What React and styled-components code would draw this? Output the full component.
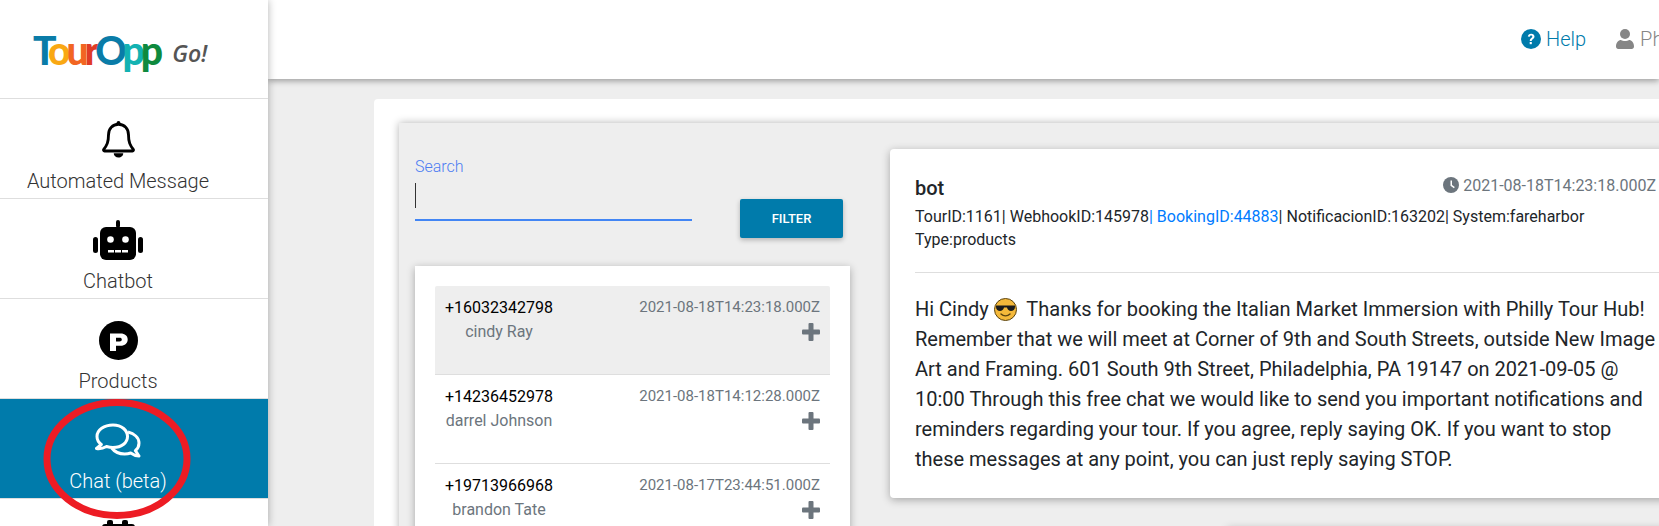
import styled, { createGlobalStyle } from 'styled-components';

const GlobalStyle = createGlobalStyle`
  html, body {
    margin: 0;
    height: 526px;
    overflow: hidden;
    background: #eeeeee;
    font-family: Roboto, "Liberation Sans", sans-serif;
  }
  * { box-sizing: border-box; }
`

const conversations = [
  { phone: '+16032342798', name: 'cindy Ray', time: '2021-08-18T14:23:18.000Z', active: true },
  { phone: '+14236452978', name: 'darrel Johnson', time: '2021-08-18T14:12:28.000Z' },
  { phone: '+19713966968', name: 'brandon Tate', time: '2021-08-17T23:44:51.000Z' },
]

const logoLetters = [
  ['T', '#0a7ca8'], ['o', '#f9a813'], ['u', '#f26522'], ['r', '#e03c26'],
  ['O', '#0a7ca8'], ['p', '#12b2b2'], ['p', '#0e8a3e'],
]

function BellIcon() {
  return (
    <svg width="35" height="40" viewBox="0 0 36 42" fill="none">
      <path d="M18 4.500c-6.500 0-10.500 5-10.500 11 0 8-1.700 11-5 15.300-.6.800-.1 1.700.8 1.700h29.400c.9 0 1.400-.9.8-1.700-3.300-4.300-5-7.300-5-15.300 0-6-4-11-10.500-11z" stroke="#000" strokeWidth="3" strokeLinejoin="round" />
      <circle cx="18" cy="3" r="2" fill="#000" />
      <path d="M13 35h10c0 2.500-2.200 4.500-5 4.500s-5-2-5-4.500z" fill="#000" />
    </svg>
  )
}

function RobotIcon() {
  return (
    <svg width="50" height="40" viewBox="0 0 50 40" fill="#000">
      <rect x="23" y="0" width="4" height="8" rx="2" />
      <rect x="7" y="7" width="36" height="33" rx="6" />
      <rect x="0" y="17" width="5" height="16" rx="2.500" />
      <rect x="45" y="17" width="5" height="16" rx="2.500" />
      <circle cx="17.500" cy="19.500" r="3.300" fill="#fff" />
      <circle cx="32.500" cy="19.500" r="3.300" fill="#fff" />
      <rect x="15" y="30" width="6" height="2.500" fill="#fff" />
      <rect x="22" y="30" width="6" height="2.500" fill="#fff" />
      <rect x="29" y="30" width="6" height="2.500" fill="#fff" />
    </svg>
  )
}

function ParkingIcon() {
  return (
    <svg width="39" height="39" viewBox="0 0 39 39">
      <circle cx="19.500" cy="19.500" r="19.500" fill="#000" />
      <path d="M11 30V12.500h10.500c4.500 0 7.200 2.400 7.200 6s-2.700 6.300-7.200 6.300H17V30zM17 16.800v3.700h3.500c1.500 0 2.300-.7 2.300-1.900s-.8-1.800-2.300-1.800z" fill="#fff" fillRule="evenodd" />
    </svg>
  )
}

function ChatIcon() {
  return (
    <svg width="46" height="35" viewBox="1 0 46 35" fill="none" stroke="#fff" strokeWidth="3" strokeLinejoin="round">
      <path d="M19 2C10 2 3 7 3 13.500c0 3.200 1.700 6 4.300 8L2.500 25.500c3.500.5 7-.3 10-2 2 .6 4.200 1 6.500 1 9 0 14.500-5 14.500-11S28 2 19 2z" />
      <path d="M34 9c6 1.500 11 5.500 11 11 0 3-1.400 5.800-3.600 7.700l3.600 5.300c-3-.2-6-1.300-8.300-3-2 .7-4 1-6 1-5.500 0-10-2-13-6" />
    </svg>
  )
}

function HashIcon() {
  return (
    <svg width="33" height="40" viewBox="0 0 33 40" fill="#000">
      <rect x="5" y="0" width="6" height="40" rx="2" />
      <rect x="20" y="0" width="6" height="40" rx="2" />
      <rect x="0" y="4" width="33" height="6" rx="3" />
    </svg>
  )
}

function PlusIcon() {
  return (
    <svg width="18" height="18" viewBox="0 0 18 18" fill="#6c757d">
      <rect x="6.500" y="0" width="5" height="18" rx="1" />
      <rect x="0" y="6.500" width="18" height="5" rx="1" />
    </svg>
  )
}

function HelpIcon() {
  return (
    <svg width="20" height="20" viewBox="0 0 20 20">
      <circle cx="10" cy="10" r="10" fill="#007bab" />
      <path d="M6.800 7.600C7 5.800 8.300 4.700 10.200 4.700c1.900 0 3.300 1.100 3.300 2.800 0 2.500-2.800 2.500-2.800 4.600H8.800c0-3 2.500-3 2.500-4.500 0-.7-.5-1.100-1.200-1.100-.8 0-1.200.5-1.300 1.300z" fill="#fff" />
      <rect x="8.700" y="13" width="2.100" height="2.200" fill="#fff" />
    </svg>
  )
}

function UserIcon() {
  return (
    <svg width="18" height="20" viewBox="0 0 18 20" fill="#868686">
      <circle cx="9" cy="5" r="5" />
      <path d="M0 17.500c0-4 2.500-6.500 5-6.500 1 .6 2.500 1 4 1s3-.4 4-1c2.500 0 5 2.500 5 6.500 0 1.500-1 2.500-2.200 2.500H2.200C1 20 0 19 0 17.500z" />
    </svg>
  )
}

function ClockIcon() {
  return (
    <svg width="16" height="16" viewBox="0 0 16 16">
      <circle cx="8" cy="8" r="8" fill="#6c757d" />
      <path d="M7.500 3.500h1.500v4.500l2.800 2-.9 1.200-3.400-2.500z" fill="#fff" />
    </svg>
  )
}

function SunglassesEmoji() {
  return (
    <svg width="23" height="23" viewBox="0 0 23 23">
      <circle cx="11.500" cy="11.500" r="11" fill="#f5b93a" stroke="#5a4310" strokeWidth="1" />
      <path d="M2 7.500h19v1.500c0 2.500-2 4-4 4s-3.500-1.500-4-3.500h-3c-.5 2-2 3.500-4 3.500s-4-1.500-4-4z" fill="#1c1c1c" />
      <path d="M7 16c2.500 2.500 6.500 2.500 9 0" fill="none" stroke="#5a4310" strokeWidth="1.400" strokeLinecap="round" />
    </svg>
  )
}

function App() {
  return (
    <Page>
      <GlobalStyle />

      <Sidebar>
        <LogoBox>
          <Logo>
            {logoLetters.map(([letter, color], i) => <LogoLetter key={i} $color={color}>{letter}</LogoLetter>)}
          </Logo>
          <LogoGo>Go!</LogoGo>
        </LogoBox>
        <NavItem><NavIcon><BellIcon /></NavIcon>Automated Message</NavItem>
        <NavItem><NavIcon><RobotIcon /></NavIcon>Chatbot</NavItem>
        <NavItem><NavIcon><ParkingIcon /></NavIcon>Products</NavItem>
        <NavItem $active><NavIcon><ChatIcon /></NavIcon>Chat (beta)</NavItem>
        <NavItem><NavIcon><HashIcon /></NavIcon></NavItem>
      </Sidebar>

      <RedCircle width="154" height="128" viewBox="0 0 154 128">
        <ellipse cx="77" cy="64" rx="70" ry="56.500" fill="none" stroke="#ed1c24" strokeWidth="7" />
      </RedCircle>

      <Content>
        <Header>
          <HelpLink><HelpIcon />Help</HelpLink>
          <UserLink><UserIcon />Philly Tour Hub</UserLink>
        </Header>

        <Board>
          <ChatPanel>
            <LeftColumn>
              <SearchRow>
                <SearchField>
                  <SearchLabel>Search</SearchLabel>
                  <SearchInput><Caret /></SearchInput>
                </SearchField>
                <FilterButton>FILTER</FilterButton>
              </SearchRow>

              <ListCard>
                {conversations.map(c =>
                  <Conversation key={c.phone} $active={c.active}>
                    <Who>
                      <Phone>{c.phone}</Phone>
                      <Name>{c.name}</Name>
                    </Who>
                    <Meta>
                      <Time>{c.time}</Time>
                      <PlusIcon />
                    </Meta>
                  </Conversation>
                )}
              </ListCard>
            </LeftColumn>

            <RightColumn>
              <MessageCard>
                <MessageHead>
                  <Sender>bot</Sender>
                  <Stamp><ClockIcon />2021-08-18T14:23:18.000Z</Stamp>
                </MessageHead>
                <Details>
                  TourID:1161| WebhookID:145978<BookingLink>| BookingID:44883</BookingLink>| NotificacionID:163202| System:fareharbor
                  <br />Type:products
                </Details>
                <Divider />
                <MessageBody>
                  Hi Cindy <EmojiWrap><SunglassesEmoji /></EmojiWrap> Thanks for booking the Italian Market Immersion with Philly Tour Hub!<br />
                  Remember that we will meet at Corner of 9th and South Streets, outside New Image<br />
                  Art and Framing. 601 South 9th Street, Philadelphia, PA 19147 on 2021-09-05 @<br />
                  10:00 Through this free chat we would like to send you important notifications and<br />
                  reminders regarding your tour. If you agree, reply saying OK. If you want to stop<br />
                  these messages at any point, you can just reply saying STOP.
                </MessageBody>
              </MessageCard>
              <NextCard />
            </RightColumn>
          </ChatPanel>
        </Board>
      </Content>
    </Page>
  );
}

export default App;

const Page = styled.div`
  position: relative;
  display: flex;
  width: 1659px;
  height: 526px;
  overflow: hidden;
  background: #eeeeee;
`

const Sidebar = styled.aside`
  position: relative;
  z-index: 3;
  flex: 0 0 268px;
  background: #fff;
  box-shadow: 0 0 8px rgba(0, 0, 0, .3);
`

const LogoBox = styled.div`
  height: 99px;
  padding: 28px 0 0 33px;
  display: flex;
  align-items: flex-start;
  border-bottom: 1px solid #dedede;
`

const Logo = styled.div`
  font-family: Lato, sans-serif;
  font-weight: 900;
  font-size: 39px;
  line-height: 44px;
  letter-spacing: -4px;
`

const LogoLetter = styled.span`
  color: ${p => p.$color};
`

const LogoGo = styled.div`
  margin: 9px 0 0 13px;
  font-family: "Open Sans", sans-serif;
  font-style: italic;
  font-weight: 600;
  font-size: 23px;
  line-height: 32px;
  color: #555;
`

const NavItem = styled.div`
  height: 100px;
  padding: 20px 32px 0 0;
  text-align: center;
  font-size: 20px;
  font-weight: 300;
  line-height: 22px;
  white-space: nowrap;
  color: ${p => p.$active ? '#fff' : '#333'};
  background: ${p => p.$active ? '#007bab' : '#fff'};
  border-bottom: 1px solid #dedede;
`

const NavIcon = styled.div`
  height: 42px;
  margin-bottom: 9px;
  display: flex;
  justify-content: center;
  align-items: center;
`

const RedCircle = styled.svg`
  position: absolute;
  z-index: 4;
  left: 40px;
  top: 395px;
`

const Content = styled.main`
  flex: 1;
  min-width: 0;
`

const Header = styled.header`
  height: 79px;
  padding-top: 29px;
  display: flex;
  justify-content: flex-start;
  padding-left: 1253px;
  background: #fff;
  box-shadow: 0 2px 6px rgba(0, 0, 0, .35);
  white-space: nowrap;
`

const HelpLink = styled.a`
  display: flex;
  align-items: center;
  gap: 5px;
  height: 20px;
  font-size: 20px;
  font-weight: 300;
  color: #007bab;
`

const UserLink = styled(HelpLink)`
  margin-left: 30px;
  gap: 6px;
  color: #868686;
`

const Board = styled.div`
  margin: 20px 0 0 106px;
  padding: 24px 24px 24px 25px;
  width: 1320px;
  height: 480px;
  background: #fff;
  border-radius: 4px;
`

const ChatPanel = styled.div`
  display: flex;
  gap: 40px;
  height: 440px;
  padding: 26px 0 0 16px;
  background: #eeeeee;
  box-shadow: 0 0 8px rgba(0, 0, 0, .3);
`

const LeftColumn = styled.div`
  flex: 0 0 435px;
`

const SearchRow = styled.div`
  display: flex;
  align-items: flex-start;
  height: 117px;
`

const SearchField = styled.div`
  width: 277px;
`

const SearchLabel = styled.div`
  margin-top: 9px;
  font-size: 16px;
  font-weight: 300;
  line-height: 18px;
  color: #4d7df2;
`

const SearchInput = styled.div`
  height: 45px;
  padding-top: 7px;
  border-bottom: 2px solid #4285f4;
`

const Caret = styled.div`
  width: 1px;
  height: 25px;
  background: #333;
`

const FilterButton = styled.button`
  margin: 50px 0 0 48px;
  width: 103px;
  height: 39px;
  border: 0;
  border-radius: 2px;
  background: #007bab;
  color: #fff;
  font-family: Roboto, sans-serif;
  font-size: 13px;
  font-weight: 500;
  box-shadow: 0 2px 5px rgba(0, 0, 0, .25);
`

const ListCard = styled.div`
  padding: 20px;
  height: 300px;
  background: #fff;
  box-shadow: 0 2px 8px rgba(0, 0, 0, .3);
`

const Conversation = styled.div`
  display: flex;
  justify-content: space-between;
  height: 89px;
  padding: 10px;
  background: ${p => p.$active ? '#eeeeee' : '#fff'};
  border-bottom: 1px solid #dedede;
  border-radius: ${p => p.$active ? '2px 2px 0 0' : '0'};
`

const Who = styled.div`
  padding-top: 1px;
  text-align: center;
`

const Phone = styled.div`
  font-size: 16px;
  line-height: 22px;
  color: #000;
`

const Name = styled.div`
  margin-top: 2px;
  font-size: 16px;
  line-height: 22px;
  color: #6c757d;
`

const Meta = styled.div`
  display: flex;
  flex-direction: column;
  align-items: flex-end;
  gap: 5px;
`

const Time = styled.div`
  font-size: 15px;
  line-height: 22px;
  color: #6c757d;
`

const RightColumn = styled.div`
  flex: 1;
  min-width: 0;
`

const MessageCard = styled.div`
  padding: 28px 25px 29px;
  width: 830px;
  height: 349px;
  background: #fff;
  border-radius: 4px;
  box-shadow: 0 2px 8px rgba(0, 0, 0, .3);
`

const MessageHead = styled.div`
  display: flex;
  justify-content: space-between;
  width: 741px;
`

const Sender = styled.div`
  padding-top: 1px;
  font-size: 20px;
  font-weight: 500;
  line-height: 20px;
  color: #212529;
`

const Stamp = styled.div`
  display: flex;
  align-items: center;
  gap: 4px;
  height: 16px;
  font-size: 16px;
  color: #6c757d;
`

const Details = styled.div`
  margin-top: 7px;
  font-size: 16px;
  line-height: 23px;
  color: #212529;
  white-space: nowrap;
`

const BookingLink = styled.span`
  color: #007bff;
`

const Divider = styled.hr`
  margin: 21px 0 0;
  border: 0;
  border-top: 1px solid #dedede;
`

const MessageBody = styled.div`
  margin-top: 21px;
  font-size: 20px;
  line-height: 30px;
  color: #212529;
  white-space: nowrap;
`

const EmojiWrap = styled.span`
  display: inline-block;
  vertical-align: -5px;
  height: 23px;
  margin-right: 5px;
`

const NextCard = styled.div`
  margin: 30px 0 0 337px;
  height: 40px;
  background: #fff;
  box-shadow: 0 0 8px rgba(0, 0, 0, .2);
`
